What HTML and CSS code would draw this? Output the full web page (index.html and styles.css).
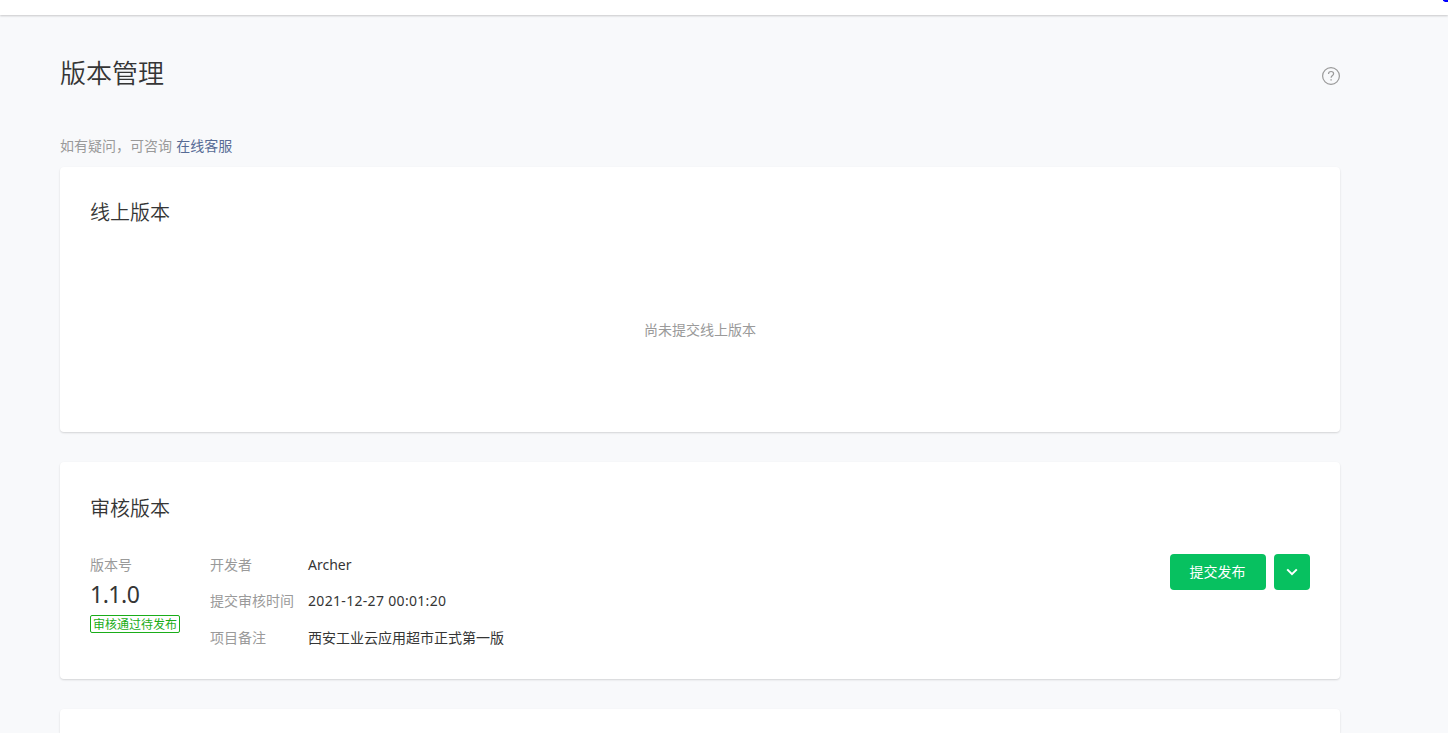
FILE: index.html
```
<!DOCTYPE html>
<html lang="zh-CN">
  <head>
    <meta charset="UTF-8" />
    <meta name="viewport" content="width=device-width, initial-scale=1.0" />
    <title>版本管理</title>
    <link rel="stylesheet" href="styles.css">
  </head>
  <body>
    <header class="header">
      <svg class="mark" width="5" height="2" viewBox="0 0 5 2">
        <path d="M0 0h5v2H2L0 .8z" fill="#0000ff" />
      </svg>
    </header>

    <main class="main">
      <div class="page-head">
        <h1>版本管理</h1>
        <a class="help" href="#">
          <svg width="20" height="20" viewBox="0 0 20 20" fill="none" stroke="#9a9a9a">
            <circle cx="10" cy="10" r="8.4" stroke-width="1.2" />
            <path d="M7.5 8.1c0-1.7 1.1-2.6 2.6-2.6s2.5.9 2.5 2.2c0 1.9-2.5 1.9-2.5 4.1" stroke-width="1.2" />
            <path d="M10.1 13.2v1.4" stroke-width="1.4" />
          </svg>
        </a>
      </div>

      <p class="tips">如有疑问，可咨询 <a href="#">在线客服</a></p>

      <section class="card online">
        <h2>线上版本</h2>
        <p class="empty">尚未提交线上版本</p>
      </section>

      <section class="card audit">
        <h2>审核版本</h2>
        <div class="version">
          <div class="version-num">
            <p class="label">版本号</p>
            <p class="num">1.1.0</p>
            <span class="tag">审核通过待发布</span>
          </div>
          <dl class="info">
            <dt>开发者</dt>
            <dd class="latin">Archer</dd>
            <dt>提交审核时间</dt>
            <dd class="latin date">2021-12-27 00:01:20</dd>
            <dt>项目备注</dt>
            <dd>西安工业云应用超市正式第一版</dd>
          </dl>
          <div class="actions">
            <button class="btn">提交发布</button>
            <button class="btn btn-more">
              <svg width="12" height="8" viewBox="0 0 12 8" fill="none" stroke="#fff" stroke-width="2">
                <path d="M1.2 1.4L6 6.2l4.8-4.8" />
              </svg>
            </button>
          </div>
        </div>
      </section>

      <section class="card"></section>
    </main>
  </body>
</html>
```

FILE: styles.css
```
* {
  box-sizing: border-box;
}

body {
  margin: 0;
  height: 100vh;
  overflow: hidden;
  background-color: #f8f9fb;
  color: #353535;
  font-family: "Noto Sans CJK SC", sans-serif;
  font-size: 14px;
  line-height: 22px;
}

h1,
h2,
p,
dl,
dd {
  margin: 0;
  font-weight: 400;
}

a {
  color: #576b95;
  text-decoration: none;
}

.header {
  display: flex;
  justify-content: flex-end;
  height: 15px;
  background-color: #fff;
  box-shadow: 0 1px 2px rgba(0, 0, 0, 0.2);
}

.mark {
  display: block;
}

.main {
  width: 1280px;
  height: calc(100vh - 15px);
  margin-left: 60px;
  padding-top: 37px;
}

.page-head {
  display: flex;
  justify-content: space-between;
  align-items: center;
  height: 40px;
}

h1 {
  font-size: 26px;
  line-height: 40px;
  font-weight: 350;
}

.help {
  display: block;
  height: 20px;
  margin: 8px -1px 0 0;
}

.help svg {
  display: block;
}

.tips {
  margin-top: 42px;
  margin-bottom: 11px;
  color: #9a9a9a;
}

.tips a {
  margin-left: 1px;
}

.card {
  height: 265px;
  margin-bottom: 30px;
  padding: 30px;
  background-color: #fff;
  border-radius: 4px;
  box-shadow: 0 1px 2px rgba(0, 0, 0, 0.15);
}

.card:last-child {
  height: 24px;
  margin-bottom: 0;
  padding: 0;
  border-radius: 4px 4px 0 0;
}

.card h2 {
  font-size: 20px;
  line-height: 30px;
  font-weight: 350;
}

.empty {
  padding-top: 91px;
  color: #9a9a9a;
  text-align: center;
}

.audit {
  height: 217px;
}

.audit h2 {
  padding-top: 1px;
}

.version {
  display: flex;
  margin-top: 30px;
}

.version-num {
  width: 120px;
}

.label,
.info dt {
  color: #9a9a9a;
}

.num {
  font-family: "Noto Sans", sans-serif;
  font-size: 23px;
  line-height: 38px;
  letter-spacing: -0.5px;
}

.tag {
  display: block;
  width: 90px;
  height: 18px;
  margin-top: 2px;
  border: 1px solid #1aad19;
  border-radius: 2px;
  color: #1aad19;
  font-size: 12px;
  line-height: 16px;
  text-align: center;
}

.info {
  display: grid;
  grid-template-columns: 84px auto;
  column-gap: 14px;
  row-gap: 14.4px;
  align-content: start;
}

.latin {
  height: 22px;
  font-family: "Noto Sans", sans-serif;
  font-size: 14px;
  line-height: 24px;
}

.date {
  letter-spacing: 0.32px;
}

.actions {
  display: flex;
  gap: 8px;
  margin-top: 1px;
  margin-left: auto;
}

.btn {
  width: 96px;
  height: 36px;
  padding: 0 1px 2px 0;
  border: 0;
  border-radius: 4px;
  background-color: #07c160;
  color: #fff;
  font-family: inherit;
  font-size: 14px;
  line-height: 34px;
}

.btn-more {
  display: flex;
  justify-content: center;
  align-items: center;
  width: 36px;
  padding: 0;
}
```
